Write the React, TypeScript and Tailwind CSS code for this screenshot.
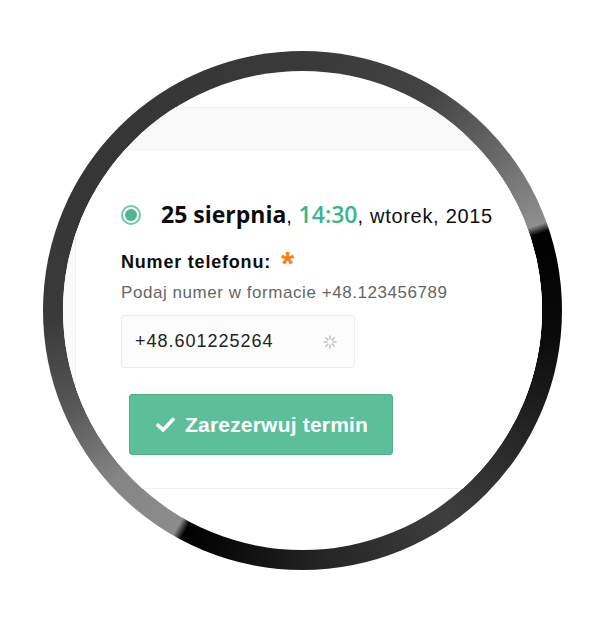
import React from 'react'

// Spinner glyph shown at the right edge of the phone input
function Spinner() {
  const spokes = [0, 45, 90, 135, 180, 225, 270, 315]
  return (
    <svg width="16" height="16" viewBox="0 0 16 16" className="text-[#c4c4c4]">
      {spokes.map(a => (
        <line
          key={a}
          x1="8"
          y1="2"
          x2="8"
          y2="5"
          stroke="currentColor"
          strokeWidth="1.6"
          strokeLinecap="round"
          transform={`rotate(${a} 8 8)`}
        />
      ))}
    </svg>
  )
}

function CheckIcon() {
  return (
    <svg width="19" height="15" viewBox="0 0 19 15">
      <path d="M2 8.2 L7 13 L17 2.5" fill="none" stroke="#fff" strokeWidth="3.6" strokeLinecap="round" strokeLinejoin="round" />
    </svg>
  )
}

export default function App() {
  return (
    <div className="w-[612px] h-[640px] bg-white pt-[51px] pl-[43px]">
      {/* Magnifier ring */}
      <div className="w-[519px] h-[519px] rounded-full p-[20px] bg-[conic-gradient(#393939_0deg,#434343_30deg,#666666_50deg,#8f8f8f_70deg,#000000_72deg,#0a0a0a_95deg,#262626_120deg,#3e3e3e_145deg,#252525_175deg,#080808_200deg,#000000_208deg,#8c8c8c_210deg,#858585_228deg,#555555_248deg,#3a3a3a_268deg,#353535_300deg,#393939_360deg)]">
        <div className="w-[479px] h-[479px] rounded-full bg-white overflow-hidden">
          <div className="pt-[36px]">
            {/* Previous row */}
            <div className="h-[43px] bg-[#f9f9f9] border-t border-b border-[#f1f1f1]" />

            <div className="bg-[#fbfbfb]">
              <div className="ml-[12px] bg-white border-l border-b border-[#efefef] pl-[45px] pt-[51px] pb-[33px]">
                {/* Date heading */}
                <div className="flex items-center h-[28px] gap-[20px]">
                  <span className="w-[20px] h-[20px] rounded-full border-2 border-[#6ccaa5] flex items-center justify-center shrink-0">
                    <span className="w-[12px] h-[12px] rounded-full bg-[#4fb88e]" />
                  </span>
                  <p className="whitespace-nowrap text-[#0d0d0d] leading-[28px]">
                    <span className="font-['Open_Sans',sans-serif] font-bold text-[23px]">25 sierpnia</span>
                    <span className="font-['Liberation_Sans',sans-serif] text-[20px] tracking-[0.7px]">,</span>
                    <span className="font-['Open_Sans',sans-serif] font-semibold text-[23px] text-[#3db48b]"> 14:30</span>
                    <span className="font-['Liberation_Sans',sans-serif] text-[20px] tracking-[0.7px]">, wtorek, 2015</span>
                  </p>
                </div>

                {/* Phone field */}
                <div className="mt-[22px] flex items-start h-[22px] font-['Liberation_Sans',sans-serif]">
                  <span className="font-bold text-[18px] leading-[22px] tracking-[0.8px] text-[#0d0d0d]">Numer telefonu:</span>
                  <span className="ml-[10px] font-bold text-[34px] leading-[24px] text-[#f5821f]">*</span>
                </div>
                <p className="mt-[10px] font-['Liberation_Sans',sans-serif] text-[17px] leading-[20px] tracking-[0.55px] text-[#666]">
                  Podaj numer w formacie +48.123456789
                </p>
                <div className="mt-[12px] w-[234px] h-[53px] rounded-[3px] border border-[#ececec] bg-[#fcfcfc] flex items-center justify-between pl-[13px] pr-[16px]">
                  <span className="font-['Liberation_Sans',sans-serif] text-[18px] tracking-[1px] text-[#222]">+48.601225264</span>
                  <Spinner />
                </div>

                <button className="mt-[26px] ml-[8px] w-[264px] h-[61px] rounded-[3px] border border-[#52b18b] bg-[#5dbf9a] flex items-center pl-[26px] gap-[10px]">
                  <CheckIcon />
                  <span className="font-['Liberation_Sans',sans-serif] font-bold text-[21px] tracking-[0.2px] text-white">Zarezerwuj termin</span>
                </button>
              </div>
            </div>
          </div>
        </div>
      </div>
    </div>
  )
}
